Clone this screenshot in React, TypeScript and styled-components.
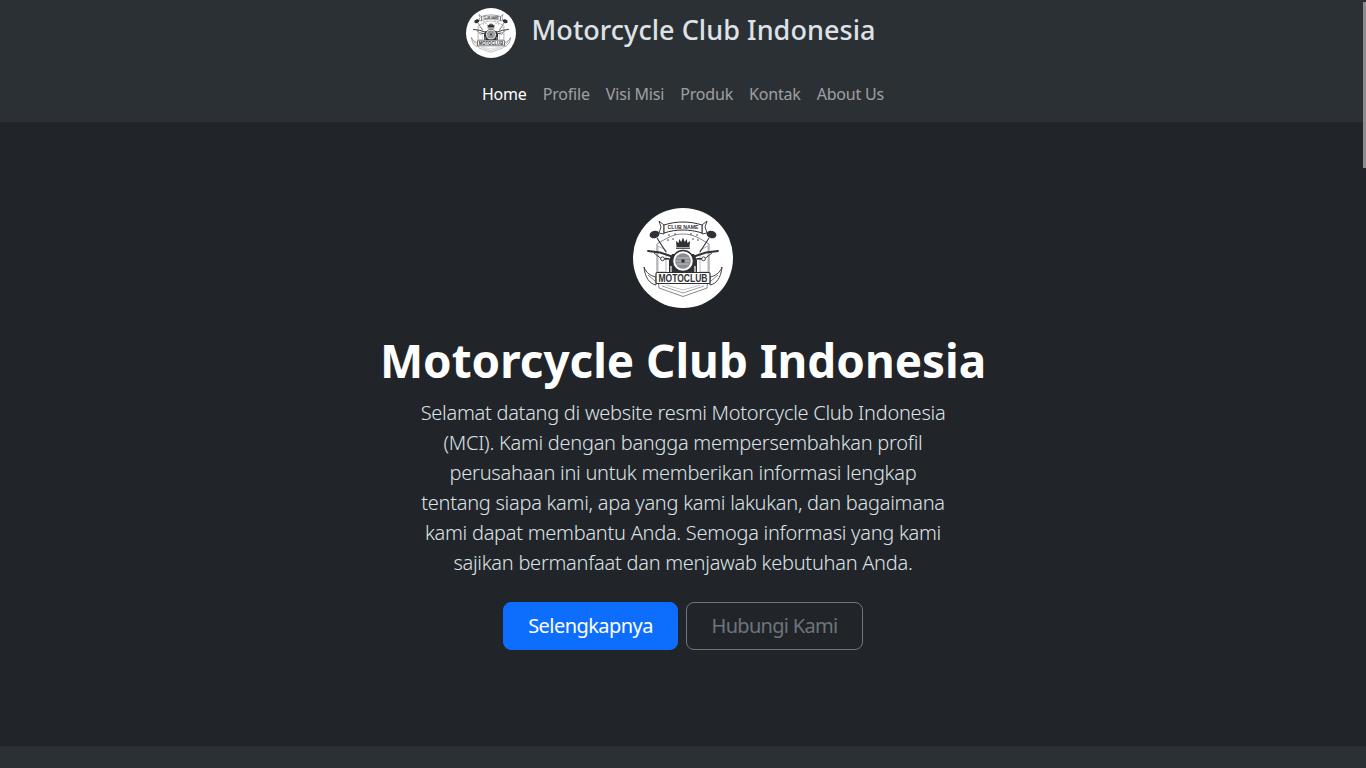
import React from "react";
import styled, { createGlobalStyle } from "styled-components";

const Global = createGlobalStyle`
  html, body { margin: 0; padding: 0; height: 100%; overflow: hidden; background: #212529; }
  body { font-family: "Noto Sans", "Open Sans", sans-serif; }
  * { box-sizing: border-box; }
`;

const Header = styled.header`
  background: #2b3035;
  height: 122px;
  padding-top: 8px;
  display: flex;
  flex-direction: column;
  align-items: center;
`;
const Brand = styled.a`
  display: flex;
  align-items: flex-start;
  gap: 16px;
  height: 50px;
  color: #dee2e6;
  font-size: 27px;
  font-weight: 500;
  line-height: 44px;
  white-space: nowrap;
  margin-left: -25px;
`;
const BrandText = styled.span`
  letter-spacing: 0.05px;
`;
const Nav = styled.nav`
  display: flex;
  margin-top: 24px;
`;
const NavLink = styled.a<{ $active?: boolean }>`
  padding: 0 8px;
  font-size: 16px;
  line-height: 24px;
  letter-spacing: -0.19px;
  color: ${(p) => (p.$active ? "#ffffff" : "rgba(255,255,255,0.55)")};
`;
const Hero = styled.section`
  height: 624px;
  padding-top: 86px;
  display: flex;
  flex-direction: column;
  align-items: center;
  text-align: center;
  background: #212529;
`;
const LogoWrap = styled.div`
  width: 100px;
  height: 100px;
  margin-bottom: 23px;
`;
const Title = styled.h1`
  margin: 0 0 9px;
  font-size: 45.8px;
  line-height: 58px;
  font-weight: 700;
  color: #fff;
  white-space: nowrap;
`;
const Lead = styled.p`
  margin: 0 0 24px;
  font-size: 20px;
  line-height: 30px;
  font-weight: 300;
  color: #dee2e6;
  white-space: nowrap;
  letter-spacing: -0.27px;
`;
const Buttons = styled.div`
  display: flex;
  gap: 8px;
`;
const Button = styled.a<{ $primary?: boolean }>`
  height: 48px;
  width: ${(p) => (p.$primary ? 175 : 177)}px;
  display: flex;
  align-items: center;
  justify-content: center;
  padding-bottom: 2px;
  border-radius: 8px;
  font-size: 20px;
  letter-spacing: ${(p) => (p.$primary ? -0.55 : -0.7)}px;
  border: 1px solid ${(p) => (p.$primary ? "#0d6efd" : "#6c757d")};
  background: ${(p) => (p.$primary ? "#0d6efd" : "transparent")};
  color: ${(p) => (p.$primary ? "#fff" : "#6c757d")};
`;
const NextSection = styled.section`
  height: 22px;
  background: #2b3035;
`;
const ScrollThumb = styled.div`
  position: fixed;
  right: 0;
  top: 2px;
  width: 3px;
  height: 166px;
  background: #8a8c8e;
`;

const INK = "#303136";

const Star = ({ x, y }: { x: number; y: number }) => (
  <path
    transform={`translate(${x} ${y}) scale(1.15)`}
    d="M0 -1 L0.3 -0.3 L1 -0.3 L0.45 0.15 L0.65 0.9 L0 0.45 L-0.65 0.9 L-0.45 0.15 L-1 -0.3 L-0.3 -0.3 Z"
    fill={INK}
  />
);

const Logo = ({ size }: { size: number }) => (
  <svg width={size} height={size} viewBox="0 0 100 100" style={{ display: "block" }}>
    <circle cx="50" cy="50" r="50" fill="#fff" />
    {/* shield */}
    <path d="M24 36 C34 30 40 26 50 26 C60 26 66 30 76 36 L76 63 L74 80 L50 88.5 L26 80 L24 63 Z" fill="#fff" stroke="#77787c" strokeWidth="0.9" />
    <path d="M29 78 L50 85 L71 78" fill="none" stroke="#8c8d90" strokeWidth="0.8" />
    <path d="M33 77 L50 82 L67 77" fill="none" stroke="#b4b5b7" strokeWidth="0.8" />
    <path d="M25 38 L33 42 L33 64 L25 64 Z M75 38 L67 42 L67 64 L75 64 Z" fill="#fff" stroke="#9a9b9e" strokeWidth="0.7" />
    {/* stars + crown */}
    <Star x={36} y={27} /><Star x={42} y={26} /><Star x={58} y={26} /><Star x={64} y={27} />
    <Star x={35} y={32} /><Star x={40} y={31} /><Star x={60} y={31} /><Star x={65} y={32} />
    <path d="M43.5 39 L43 33 L45.6 35 L46.2 31 L48.2 34 L50 29.5 L51.8 34 L53.8 31 L54.4 35 L57 33 L56.5 39 Z" fill={INK} />
    <rect x="43" y="39.6" width="14" height="1.2" fill={INK} />
    {/* mirrors, stems, bars */}
    <ellipse cx="21.5" cy="26.5" rx="5" ry="3.7" transform="rotate(-18 21.5 26.5)" fill={INK} />
    <ellipse cx="78.5" cy="26.5" rx="5" ry="3.7" transform="rotate(18 78.5 26.5)" fill={INK} />
    <path d="M24 30 L33 44 M76 30 L67 44" stroke={INK} strokeWidth="1.1" fill="none" />
    <path d="M15 43 L27 44.5 L39 48.5 M85 43 L73 44.5 L61 48.5" stroke={INK} strokeWidth="1.9" fill="none" strokeLinecap="round" />
    <path d="M21 45 L30 52 M79 45 L70 52" stroke={INK} strokeWidth="0.9" fill="none" />
    {/* bike front */}
    <path d="M39 46 L61 46 L64 52 L64 64 L36 64 L36 52 Z" fill={INK} />
    <rect x="29.5" y="50" width="7" height="1.6" fill={INK} />
    <rect x="63.5" y="50" width="7" height="1.6" fill={INK} />
    <circle cx="29.5" cy="50.8" r="1.9" fill="#fff" stroke={INK} strokeWidth="0.9" />
    <circle cx="70.5" cy="50.8" r="1.9" fill="#fff" stroke={INK} strokeWidth="0.9" />
    <circle cx="50" cy="53" r="10.5" fill="#fff" stroke={INK} strokeWidth="1.4" />
    <circle cx="50" cy="53" r="7.8" fill="#8b8c90" />
    <path d="M44 50 L56 50 M43 53 L57 53 M44 56 L56 56" stroke="#d6d7d9" strokeWidth="0.7" />
    <circle cx="50" cy="53" r="1.8" fill={INK} />
    <path d="M38 58 L38 65 M62 58 L62 65" stroke="#fff" strokeWidth="1.2" />
    {/* side ribbons */}
    <path d="M11 59 C13 65 18 68 23 69 L23 77 C17 76 12 70 11 59 Z M89 59 C87 65 82 68 77 69 L77 77 C83 76 88 70 89 59 Z" fill="#fff" stroke={INK} strokeWidth="0.9" />
    <path d="M15 67 L22 73 M85 67 L78 73" stroke={INK} strokeWidth="0.6" />
    {/* top banner */}
    <path d="M26 13 L31 17 L31 26 L26 25 L28 19 Z M74 13 L69 17 L69 26 L74 25 L72 19 Z" fill="#fff" stroke={INK} strokeWidth="0.9" />
    <path d="M31 17 C43 13 57 13 69 17 L69 25 C57 21 43 21 31 25 Z" fill="#fff" stroke={INK} strokeWidth="1" />
    <text x="50" y="21.4" textAnchor="middle" textLength="31" lengthAdjust="spacingAndGlyphs" fontFamily="'Liberation Sans', sans-serif" fontSize="5.2" fontWeight="700" fill={INK}>CLUB NAME</text>
    {/* main banner */}
    <rect x="23" y="64.5" width="54" height="11" rx="1.2" fill="#fff" stroke={INK} strokeWidth="1.2" />
    <text x="50" y="73.6" textAnchor="middle" textLength="49" lengthAdjust="spacingAndGlyphs" fontFamily="'Liberation Sans', sans-serif" fontSize="10.5" fontWeight="700" fill={INK}>MOTOCLUB</text>
  </svg>
);

export default function App() {
  return (
    <>
      <Global />
      <Header>
        <Brand>
          <Logo size={50} />
          <BrandText>Motorcycle Club Indonesia</BrandText>
        </Brand>
        <Nav>
          <NavLink $active>Home</NavLink>
          <NavLink>Profile</NavLink>
          <NavLink>Visi Misi</NavLink>
          <NavLink>Produk</NavLink>
          <NavLink>Kontak</NavLink>
          <NavLink>About Us</NavLink>
        </Nav>
      </Header>
      <Hero>
        <LogoWrap><Logo size={100} /></LogoWrap>
        <Title>Motorcycle Club Indonesia</Title>
        <Lead>
          Selamat datang di website resmi Motorcycle Club Indonesia<br />
          (MCI). Kami dengan bangga mempersembahkan profil<br />
          perusahaan ini untuk memberikan informasi lengkap<br />
          tentang siapa kami, apa yang kami lakukan, dan bagaimana<br />
          kami dapat membantu Anda. Semoga informasi yang kami<br />
          sajikan bermanfaat dan menjawab kebutuhan Anda.
        </Lead>
        <Buttons>
          <Button $primary>Selengkapnya</Button>
          <Button>Hubungi Kami</Button>
        </Buttons>
      </Hero>
      <NextSection />
      <ScrollThumb />
    </>
  );
}
